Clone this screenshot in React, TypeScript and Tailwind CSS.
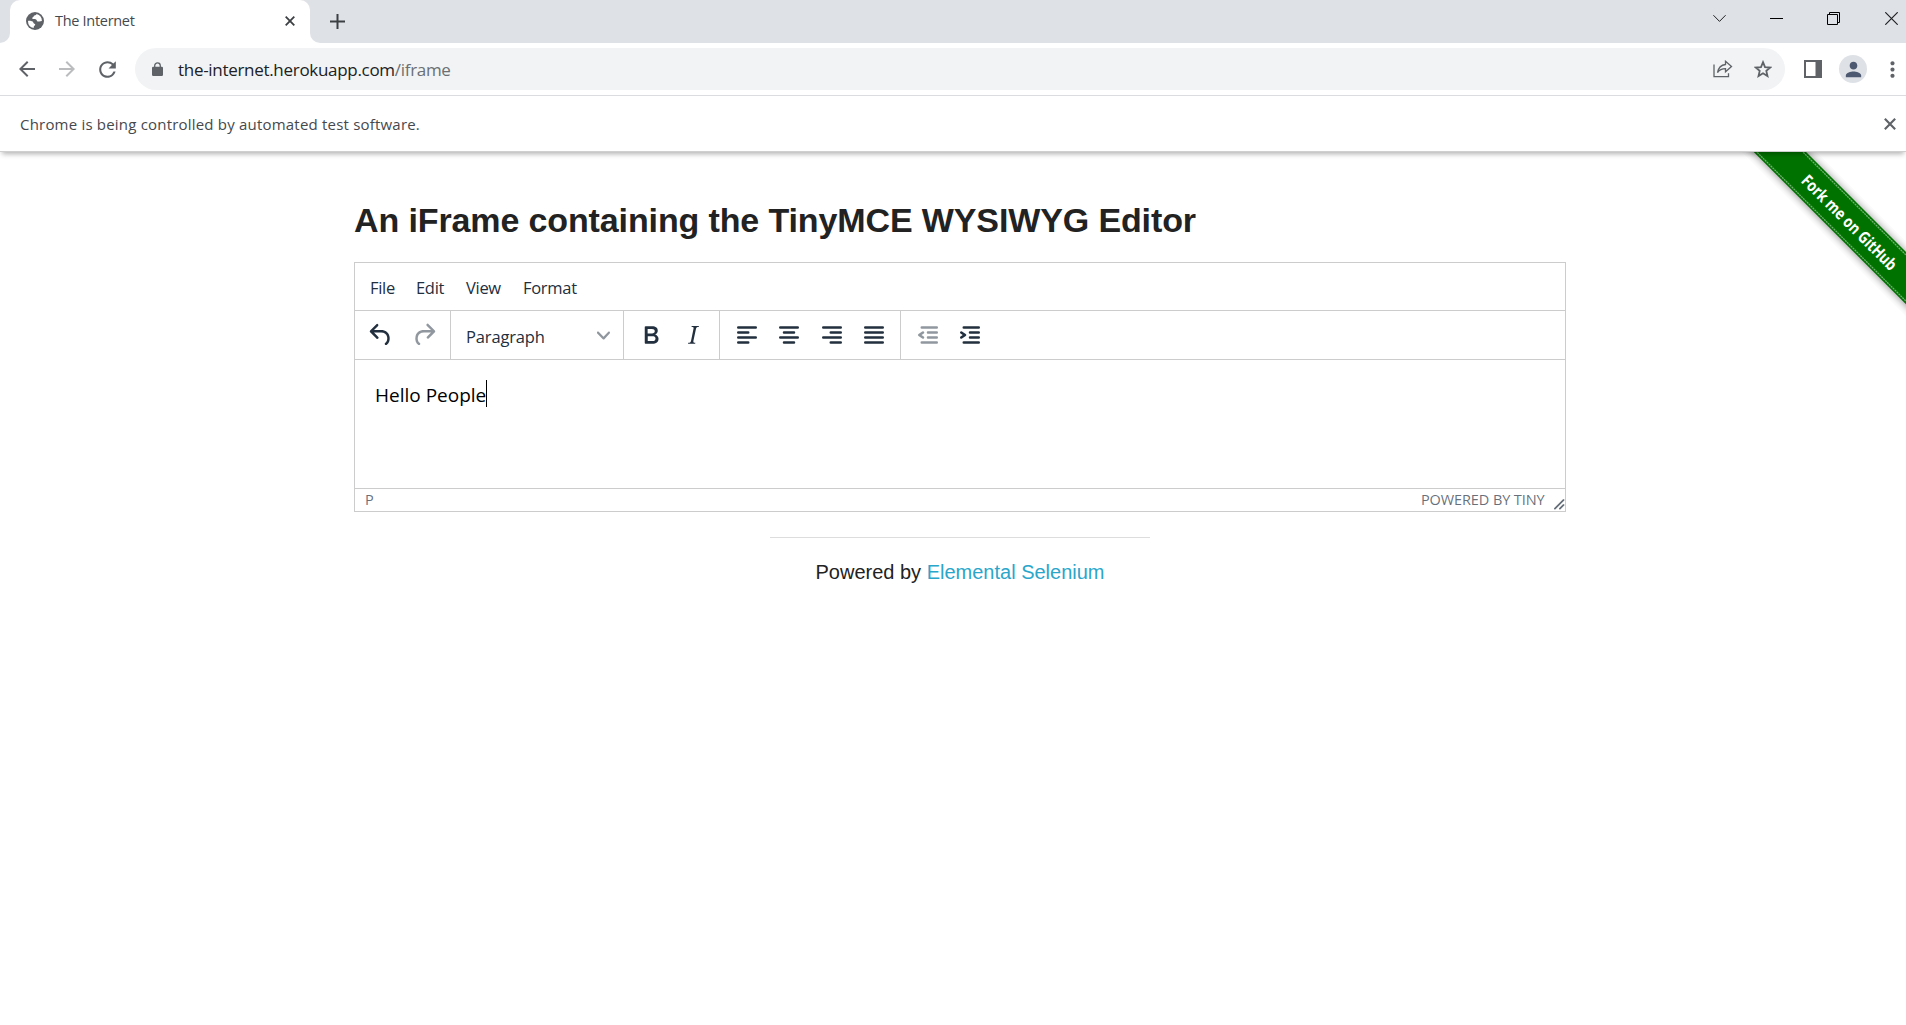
import React from "react";
import { MdArrowBack, MdArrowForward, MdRefresh, MdPerson, MdMoreVert } from "react-icons/md";

const UI = "font-['Open_Sans','Noto_Sans',sans-serif]";

function Cross({ size, className }: { size: number; className?: string }) {
  return (
    <svg width={size} height={size} viewBox="0 0 10 10" className={className} stroke="currentColor" strokeWidth="1.8" fill="none">
      <path d="M.7.7l8.6 8.6M9.3.7L.7 9.3" />
    </svg>
  );
}

function Globe() {
  return (
    <svg width="18" height="18" viewBox="0 0 18 18" className="shrink-0">
      <circle cx="9" cy="9" r="9" fill="#5f6368" />
      <path fill="#fff" d="M10.500 2.100c-.2 1-.9 1.300-2 1.500-.9.2-.6 1.400-1.500 1.700-.9.3-1.100 1.400-.2 1.700 1 .2 2.800-.2 3.600.7.7.8.2 1.600 1.400 1.700 1.300.1 2.900.1 4.100-.4A7.100 7.100 0 0 0 10.500 2.100zM2 8.900c1.300-.1 3.600-.1 4.600.7.9.7.6 1.900 1.700 2.100 1.100.2 1.200 1 .4 1.700-.7.7-1.200 1.300-1 2.500A7.100 7.100 0 0 1 2 8.900z" />
    </svg>
  );
}

function TabStrip() {
  return (
    <div className="flex h-[43px] bg-[#dee1e6]">
      <div className="flex w-[10px] bg-white">
        <div className="w-full rounded-br-[10px] bg-[#dee1e6]" />
      </div>
      <div className="bg-[#dee1e6]">
        <div className="flex h-[43px] w-[300px] items-center rounded-t-[10px] bg-white pb-px pl-[16px]">
          <Globe />
          <span className="ml-[11px] w-[230px] text-[14.500px] leading-none tracking-[-0.3px] text-[#45494d]">The Internet</span>
          <Cross size={10} className="shrink-0 text-[#3c4043]" />
        </div>
      </div>
      <div className="flex flex-1 bg-white">
        <div className="flex flex-1 items-center rounded-bl-[10px] bg-[#dee1e6] pl-[20px]">
          <svg width="15" height="15" viewBox="0 0 15 15" className="shrink-0" stroke="#3c4043" strokeWidth="2">
            <path d="M0 7.500h15M7.500 0v15" />
          </svg>
          <div className="ml-auto flex h-full items-start pt-[12px]">
            <svg width="13" height="13" viewBox="0 0 13 13" className="mr-[44px]" stroke="#202124" strokeWidth="1" fill="none">
              <path d="M.4 3.200L6.500 9.400l6.100-6.200" />
            </svg>
            <svg width="13" height="13" viewBox="0 0 13 13" className="mr-[44px]" stroke="#000" strokeWidth="1">
              <path d="M0 6.500h13" />
            </svg>
            <svg width="13" height="13" viewBox="0 0 13 13" className="mr-[45px]" stroke="#000" strokeWidth="1" fill="none">
              <path d="M.5 2.500h10v10H.5zM2.500 2V.5h10v10H11" />
            </svg>
            <svg width="13" height="13" viewBox="0 0 13 13" className="mr-[8px]" stroke="#202124" strokeWidth="1.2">
              <path d="M.3.3l12.400 12.400M12.700.3L.3 12.700" />
            </svg>
          </div>
        </div>
      </div>
    </div>
  );
}

function AddressBar() {
  return (
    <div className="flex h-[53px] items-center border-b border-[#dadce0] bg-white pl-[15px] text-[#5f6368]">
      <MdArrowBack className="mr-[16px] size-[24px]" />
      <MdArrowForward className="mr-[16px] size-[24px] text-[#babcbe]" />
      <MdRefresh className="mr-[15px] size-[25px]" />
      <div className="flex h-[42px] w-[1650px] items-center rounded-full bg-[#f1f3f4] pl-[17px]">
        <svg width="11" height="14" viewBox="0 0 11 14" className="shrink-0">
          <path d="M2.700 5.500V3.700a2.800 2.800 0 0 1 5.600 0v1.800" fill="none" stroke="#5f6368" strokeWidth="1.300" />
          <rect y="4.800" width="11" height="9.200" rx="1.200" fill="#5f6368" />
        </svg>
        <span className="ml-[15px] text-[17px] leading-none tracking-[-0.3px] text-[#202124]">
          the-internet.herokuapp.com<span className="text-[#6b6f73]">/iframe</span>
        </span>
        <svg width="20" height="18" viewBox="0 0 20 18" className="ml-auto mr-[21px]" stroke="#5f6368" strokeWidth="1.300" fill="none">
          <path d="M1 4.500v12.200h14.500v-3.500" />
          <path d="M12.500 1.300l6 5.200-6 5.300V8.700c-3.600 0-6 1-8 3.800.8-4.200 3.200-7.400 8-8z" />
        </svg>
        <svg width="18" height="18" viewBox="0 0 18 18" className="mr-[13px]" fill="none" stroke="currentColor" strokeWidth="1.800">
          <path d="M9 2.200l2 4.900 5.300.4-4 3.400 1.200 5.200L9 13.300l-4.500 2.800 1.200-5.200-4-3.400L7 7.100z" />
        </svg>
      </div>
      <svg width="18" height="18" viewBox="0 0 18 18" className="ml-[19px]">
        <path fill="#5f6368" fillRule="evenodd" d="M0 0h18v18H0zM2 2v14h9.500V2z" />
      </svg>
      <div className="ml-[17px] flex size-[28px] items-center justify-center rounded-full bg-[#dee1e6]">
        <MdPerson className="size-[23px] text-[#4d5970]" />
      </div>
      <MdMoreVert className="ml-[13px] size-[25px] shrink-0" />
    </div>
  );
}

function InfoBar() {
  return (
    <div className="flex h-[56px] items-center justify-between border-b border-[#cfcfcf] bg-white pl-[20px] pr-[10px] shadow-[0_4px_5px_-2px_rgba(0,0,0,0.3)]">
      <span className="pt-px text-[15px] leading-none tracking-[0.2px] text-[#45494d]">Chrome is being controlled by automated test software.</span>
      <Cross size={12} className="text-[#5f6368]" />
    </div>
  );
}

function Ribbon() {
  return (
    <svg width="186" height="186" viewBox="0 0 186 186" className="absolute right-0 top-0">
      <defs>
        <filter id="soft" x="-20%" y="-20%" width="140%" height="140%">
          <feGaussianBlur stdDeviation="4" />
        </filter>
      </defs>
      <g transform="translate(129.500 69.600) rotate(45)">
        <rect x="-160" y="-18" width="320" height="37" fill="#000" opacity="0.45" filter="url(#soft)" />
        <rect x="-160" y="-18.500" width="320" height="37" fill="#007200" />
        <path d="M-160-16.300h320M-160 16.300h320" stroke="#6fb06f" strokeWidth="1.300" strokeDasharray="2 0.700" />
        <text x="-63" y="6.500" textLength="127" lengthAdjust="spacingAndGlyphs" fontSize="16.500" fontWeight="700" fill="#fff" fontFamily="'Open Sans', sans-serif">
          Fork me on GitHub
        </text>
      </g>
    </svg>
  );
}

const ICONS = {
  undo: "M6.4 8H12c3.7 0 6.2 2 6.8 5.1.6 2.7-.4 5.6-2.3 6.8a1 1 0 0 1-1-1.8c1.1-.6 1.8-2.7 1.4-4.6-.5-2.1-2.1-3.5-4.9-3.5H6.4l3.3 3.3a1 1 0 1 1-1.4 1.4l-5-5a1 1 0 0 1 0-1.4l5-5a1 1 0 0 1 1.4 1.4L6.4 8z",
  redo: "M17.6 10H12c-2.8 0-4.4 1.4-4.9 3.5-.4 2 .3 4 1.4 4.6a1 1 0 1 1-1 1.8c-2-1.2-2.9-4.1-2.3-6.8.6-3 3-5.1 6.8-5.1h5.6l-3.3-3.3a1 1 0 1 1 1.4-1.4l5 5a1 1 0 0 1 0 1.4l-5 5a1 1 0 0 1-1.4-1.4l3.3-3.3z",
  bold: "M7.8 19c-.3 0-.5 0-.6-.2l-.2-.5V5.7c0-.2 0-.4.2-.5l.6-.2h5c1.5 0 2.700.3 3.500 1 .7.6 1.100 1.400 1.100 2.500a3 3 0 0 1-.6 1.900c-.4.6-1 1-1.600 1.200.4.1.9.3 1.300.6s.8.7 1 1.200c.4.4.5 1 .5 1.600 0 1.300-.4 2.300-1.300 3-.8.7-2.100 1-3.800 1H7.800zm5-8.300c.6 0 1.200-.1 1.600-.5.4-.3.6-.7.6-1.300 0-1.100-.8-1.700-2.300-1.700H9.300v3.500h3.400zm.5 6c.7 0 1.300-.1 1.700-.4.4-.4.6-.9.6-1.500s-.2-1-.7-1.400c-.4-.3-1-.4-2-.4H9.400v3.800h4z",
  italic: "M16.7 4.7l-.1.9h-.3c-.6 0-1 0-1.4.3-.3.3-.4.6-.5 1.100l-2.100 9.800v.6c0 .5.4.8 1.400.8h.2l-.2.8H8l.2-.8h.2c1.100 0 1.800-.5 2-1.500l2-9.800.1-.5c0-.6-.4-.8-1.400-.8h-.3l.2-.9h5.800z",
  alignLeft: "M5 5h14a1 1 0 0 1 0 2H5a1 1 0 1 1 0-2zm0 4h8a1 1 0 0 1 0 2H5a1 1 0 1 1 0-2zm0 8h8a1 1 0 0 1 0 2H5a1 1 0 0 1 0-2zm0-4h14a1 1 0 0 1 0 2H5a1 1 0 0 1 0-2z",
  alignCenter: "M5 5h14a1 1 0 0 1 0 2H5a1 1 0 1 1 0-2zm3 4h8a1 1 0 0 1 0 2H8a1 1 0 1 1 0-2zm0 8h8a1 1 0 0 1 0 2H8a1 1 0 0 1 0-2zm-3-4h14a1 1 0 0 1 0 2H5a1 1 0 0 1 0-2z",
  alignRight: "M5 5h14a1 1 0 0 1 0 2H5a1 1 0 1 1 0-2zm6 4h8a1 1 0 0 1 0 2h-8a1 1 0 0 1 0-2zm0 8h8a1 1 0 0 1 0 2h-8a1 1 0 0 1 0-2zm-6-4h14a1 1 0 0 1 0 2H5a1 1 0 0 1 0-2z",
  justify: "M5 5h14a1 1 0 0 1 0 2H5a1 1 0 1 1 0-2zm0 4h14a1 1 0 0 1 0 2H5a1 1 0 1 1 0-2zm0 4h14a1 1 0 0 1 0 2H5a1 1 0 0 1 0-2zm0 4h14a1 1 0 0 1 0 2H5a1 1 0 0 1 0-2z",
  outdent: "M7 5h12a1 1 0 0 1 0 2H7a1 1 0 1 1 0-2zm5 4h7a1 1 0 0 1 0 2h-7a1 1 0 0 1 0-2zm0 4h7a1 1 0 0 1 0 2h-7a1 1 0 0 1 0-2zm-5 4h12a1 1 0 0 1 0 2H7a1 1 0 0 1 0-2zm1.600-3.800a1 1 0 0 1-1.200 1.600l-3-2a1 1 0 0 1 0-1.600l3-2a1 1 0 0 1 1.200 1.600L6.800 12l1.800 1.200z",
  indent: "M7 5h12a1 1 0 0 1 0 2H7a1 1 0 1 1 0-2zm5 4h7a1 1 0 0 1 0 2h-7a1 1 0 0 1 0-2zm0 4h7a1 1 0 0 1 0 2h-7a1 1 0 0 1 0-2zm-5 4h12a1 1 0 0 1 0 2H7a1 1 0 0 1 0-2zm-2.600-3.800L6.200 12l-1.800-1.200a1 1 0 0 1 1.200-1.600l3 2a1 1 0 0 1 0 1.600l-3 2a1 1 0 1 1-1.200-1.600z",
};

function Tool({ name, muted }: { name: keyof typeof ICONS; muted?: boolean }) {
  return (
    <button className={muted ? "flex w-[42.500px] justify-center text-[#222f3e]/50" : "flex w-[42.500px] justify-center text-[#222f3e]"}>
      <svg width="30" height="30" viewBox="0 0 24 24" fill="currentColor" fillRule="evenodd">
        <path d={ICONS[name]} />
      </svg>
    </button>
  );
}

function Editor() {
  return (
    <div className={`flex h-[250px] w-[1212px] flex-col border border-[#ccc] text-[#222f3e] ${UI}`}>
      <div className="flex h-[48px] border-b border-[#ccc] pl-[15px] pt-[14px] text-[16.500px] leading-[22px] tracking-[-0.3px]">
        <span className="w-[46px]">File</span>
        <span className="w-[50px]">Edit</span>
        <span className="w-[57px]">View</span>
        <span>Format</span>
      </div>
      <div className="flex h-[49px] items-stretch border-b border-[#ccc]">
        <div className="flex w-[96px] items-center border-r border-[#ccc] pl-[5px]">
          <Tool name="undo" />
          <Tool name="redo" muted />
        </div>
        <div className="flex w-[173px] items-center justify-between border-r border-[#ccc] pl-[15px] pr-[13px] text-[16.500px] tracking-[-0.15px]">
          <span className="pt-[3px] leading-[22px]">Paragraph</span>
          <svg width="13" height="13" viewBox="0 0 10 10" fill="#222f3e" opacity="0.5">
            <path d="M8.700 2.200c.3-.3.8-.3 1 0 .4.4.4.9 0 1.200L5.700 7.800c-.3.3-.9.3-1.200 0L.2 3.400a.8.8 0 0 1 0-1.200c.3-.3.8-.3 1.100 0L5 6l3.700-3.800z" />
          </svg>
        </div>
        <div className="flex w-[96px] items-center border-r border-[#ccc] pl-[5.500px]">
          <Tool name="bold" />
          <Tool name="italic" />
        </div>
        <div className="flex w-[181px] items-center border-r border-[#ccc] pl-[5.500px]">
          <Tool name="alignLeft" />
          <Tool name="alignCenter" />
          <Tool name="alignRight" />
          <Tool name="justify" />
        </div>
        <div className="flex items-center pl-[5.500px]">
          <Tool name="outdent" muted />
          <Tool name="indent" />
        </div>
      </div>
      <div className="flex flex-1 items-start pl-[20px] pt-[20px] text-black">
        <span className="pt-[2px] text-[19px] leading-[27px]">Hello People</span>
        <span className="h-[27px] w-px bg-black" />
      </div>
      <div className="flex h-[23px] items-center border-t border-[#ccc] pl-[10px] text-[14.500px] leading-none text-[#222f3e]/70">
        <span>P</span>
        <span className="ml-auto mr-[8px] tracking-[-0.1px]">POWERED BY TINY</span>
        <svg width="12.500" height="12.500" viewBox="0 0 10 10" className="mt-[8px]" fill="currentColor">
          <path d="M8.100 1.100A.5.5 0 1 1 9 2l-7 7A.5.5 0 1 1 1 8l7-7zM8.100 5.100A.5.5 0 1 1 9 6l-3 3A.5.5 0 1 1 5 8l3-3z" />
        </svg>
      </div>
    </div>
  );
}

export default function App() {
  return (
    <div className="flex h-[1025px] w-[1906px] flex-col overflow-hidden bg-white">
      <header className={`relative z-10 ${UI}`}>
        <TabStrip />
        <AddressBar />
        <InfoBar />
      </header>
      <main className="relative flex-1 pl-[354px] font-['Liberation_Sans',Arial,sans-serif] text-[#222]">
        <Ribbon />
        <h3 className="mb-[18px] pt-[44px] text-[34px] font-bold leading-[48px] tracking-[-0.12px]">An iFrame containing the TinyMCE WYSIWYG Editor</h3>
        <Editor />
        <footer className="flex w-[1212px] flex-col items-center">
          <hr className="mt-[25px] w-[380px] border-[#ddd]" />
          <p className="mt-[19px] text-[20px] leading-[30px]">
            Powered by <a className="text-[#2ba6cb]">Elemental Selenium</a>
          </p>
        </footer>
      </main>
    </div>
  );
}
